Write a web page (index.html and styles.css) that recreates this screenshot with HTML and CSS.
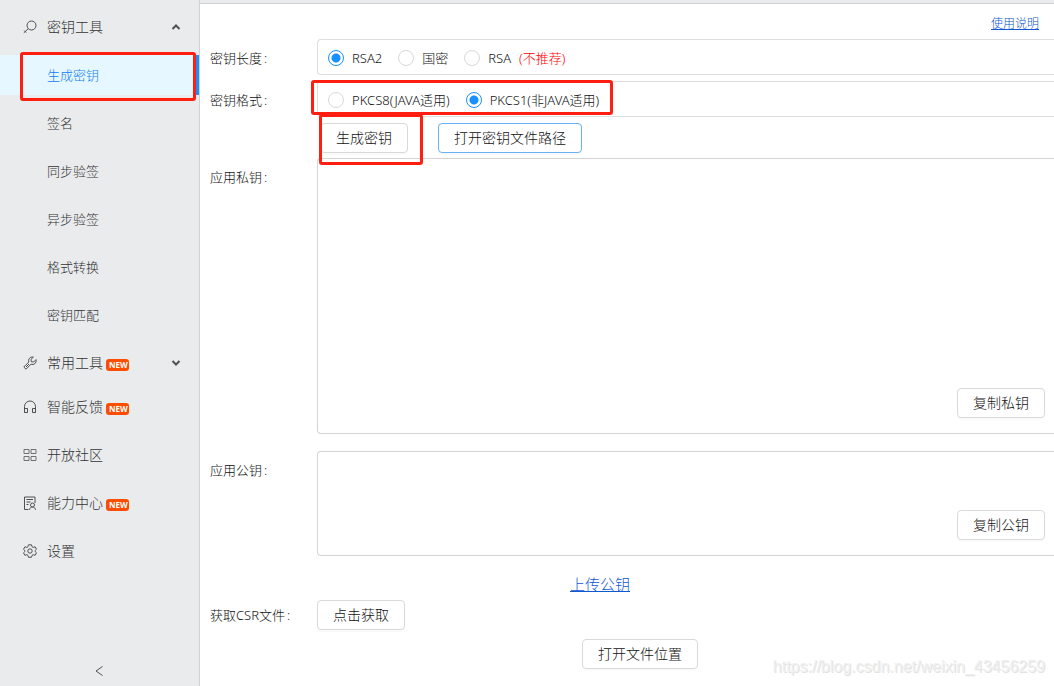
FILE: index.html
```html
<!DOCTYPE html>
<html lang="zh-CN">
<head>
<meta charset="utf-8">
<title>密钥工具</title>
<link rel="stylesheet" href="styles.css">
</head>
<body>
<div class="app">
  <aside class="sidebar">
    <nav class="nav">
      <button class="nav-item" type="button" aria-expanded="true">
        <svg class="icon" viewBox="0 0 14 14"><circle cx="8.500" cy="5.500" r="4.500"/><path d="M5.200 8.800 .8 12.800M1.200 10.600l2 2"/></svg>
        <span>密钥工具</span>
        <svg class="chevron" viewBox="0 0 10 10"><path d="M1.500 7 5 3.500 8.500 7"/></svg>
      </button>
      <a class="nav-item sub active" href="#generate">生成密钥<span class="mark mark-nav"></span></a>
      <a class="nav-item sub" href="#sign">签名</a>
      <a class="nav-item sub" href="#sync">同步验签</a>
      <a class="nav-item sub" href="#async">异步验签</a>
      <a class="nav-item sub" href="#convert">格式转换</a>
      <a class="nav-item sub" href="#match">密钥匹配</a>
      <button class="nav-item tight" type="button" aria-expanded="false">
        <svg class="icon" viewBox="0 0 14 14"><path d="M9.500 1a3.700 3.700 0 0 0-3.700 5L.8 11l2.200 2.200L8 8.200a3.700 3.700 0 0 0 5-4.600L10.600 6 8.300 5.700 8 3.400l2.400-2.300zM3 11l3-3"/></svg>
        <span>常用工具</span><span class="badge">NEW</span>
        <svg class="chevron" viewBox="0 0 10 10"><path d="M1.500 3 5 6.500 8.500 3"/></svg>
      </button>
      <a class="nav-item" href="#feedback">
        <svg class="icon" viewBox="0 0 14 14"><path d="M1.500 12.500V6.500a5.500 5.500 0 0 1 11 0v6M1.500 8.500H4.500v4H1.500zM9.500 8.500h3v4h-3z"/></svg>
        <span>智能反馈</span><span class="badge">NEW</span>
      </a>
      <a class="nav-item" href="#community">
        <svg class="icon soft" viewBox="0 0 14 14"><path d="M1 1.500h5V5.500H1zM8 1.500h5V5.500H8zM1 8.500h5v4H1zM8 8.500h5v4H8z"/></svg>
        <span>开放社区</span>
      </a>
      <a class="nav-item" href="#ability">
        <svg class="icon" viewBox="0 0 14 14"><path d="M5.500 13.500h-4V1h10.500v6M3.500 3.500h6.500M3.500 6h4M3.500 8.500h2M6.500 13.800c0-3.600 6-3.600 6 0"/><circle cx="9.500" cy="9" r="2"/></svg>
        <span>能力中心</span><span class="badge">NEW</span>
      </a>
      <a class="nav-item" href="#settings">
        <svg class="icon" viewBox="0 0 14 14"><path d="M5.500 .8h3l.5 1.900 1.200.7 1.900-.6 1.400 2.500L12.100 6.600v.9l1.400 1.300-1.400 2.500-1.900-.6-1.200.7-.5 1.900h-3L5 11.400l-1.200-.7-1.900.6L.5 8.800l1.400-1.300v-.9L.5 5.300l1.400-2.500 1.900.6L5 2.700z"/><circle cx="7" cy="7" r="2.200"/></svg>
        <span>设置</span>
      </a>
    </nav>
    <button class="collapse" type="button" aria-label="收起">
      <svg class="collapse-icon" viewBox="0 0 10 12"><path d="M8.500 1.500 2 6l6.500 4.500"/></svg>
    </button>
  </aside>

  <main class="main">
    <div class="help"><a class="link" href="#help">使用说明</a></div>
    <form class="form">
      <div class="row">
        <span class="label" id="len-label">密钥长度<i>:</i></span>
        <div class="panel" role="radiogroup" aria-labelledby="len-label">
          <div class="options">
            <label class="option"><input type="radio" name="len" checked>RSA2</label>
            <label class="option"><input type="radio" name="len">国密</label>
            <label class="option"><input type="radio" name="len">RSA<span class="warn">(不推荐)</span></label>
          </div>
        </div>
      </div>
      <div class="row">
        <span class="label" id="fmt-label">密钥格式<i>:</i></span>
        <div class="panel" role="radiogroup" aria-labelledby="fmt-label">
          <div class="options">
            <label class="option"><input type="radio" name="fmt">PKCS8(JAVA适用)</label>
            <label class="option"><input type="radio" name="fmt" checked>PKCS1(非JAVA适用)</label>
            <span class="mark mark-format"></span>
          </div>
        </div>
      </div>
      <div class="actions">
        <div class="generate">
          <button class="btn" type="button">生成密钥</button>
          <span class="mark mark-generate"></span>
        </div>
        <button class="btn focused" type="button">打开密钥文件路径</button>
      </div>
      <div class="row private">
        <label class="label" for="private-key">应用私钥<i>:</i></label>
        <div class="field">
          <textarea class="key tall" id="private-key"></textarea>
          <button class="btn copy" type="button">复制私钥</button>
        </div>
      </div>
      <div class="row public">
        <label class="label" for="public-key">应用公钥<i>:</i></label>
        <div class="field">
          <textarea class="key" id="public-key"></textarea>
          <button class="btn copy" type="button">复制公钥</button>
        </div>
      </div>
      <div class="upload"><a class="link" href="#upload">上传公钥</a></div>
      <div class="row csr">
        <label class="label" for="csr-button">获取CSR文件<i>:</i></label>
        <button class="btn" id="csr-button" type="button">点击获取</button>
      </div>
      <div class="location"><button class="btn" type="button">打开文件位置</button></div>
    </form>
    <span class="watermark">https://blog.csdn.net/weixin_43456259</span>
  </main>
</div>
</body>
</html>
```
FILE: styles.css
```css
* {
  box-sizing: border-box;
}

body {
  margin: 0;
  font-family: "Noto Sans", "Noto Sans CJK SC", sans-serif;
  font-size: 13px;
  font-weight: 300;
  line-height: 20px;
  color: #111;
  background: #fff;
}

button,
textarea {
  font: inherit;
  color: inherit;
}

a {
  color: inherit;
  text-decoration: none;
}

svg {
  fill: none;
  stroke: #505050;
  flex: none;
}

.app {
  display: grid;
  grid-template-columns: 200px 1fr;
  min-height: 100vh;
}

/* Sidebar */

.sidebar {
  display: flex;
  flex-direction: column;
  justify-content: space-between;
  background: #e9ebed;
  border-right: 1px solid #d2d2d2;
  color: #333;
}

.nav {
  display: flex;
  flex-direction: column;
  gap: 8px;
  padding-top: 7px;
}

.nav-item {
  position: relative;
  display: flex;
  align-items: center;
  width: 100%;
  height: 40px;
  padding: 0 18px 0 23px;
  border: 0;
  background: none;
  font-size: 14px;
  text-align: left;
}

.nav-item.sub {
  padding-left: 47px;
  padding-bottom: 1px;
  font-size: 13px;
}

.nav-item.tight {
  margin-bottom: -4px;
}

.nav-item.active {
  color: #1080f5;
  background: #e6f7ff;
  border-right: 3px solid #1890ff;
}

.icon {
  width: 14px;
  height: 14px;
  margin-right: 10px;
}

.icon.soft {
  stroke: #707070;
}

.chevron {
  width: 10px;
  height: 10px;
  margin-left: auto;
  stroke-width: 2;
}

.badge {
  height: 12px;
  margin: 4px 0 0 3px;
  padding: 0 1px 0 3px;
  border-radius: 3px;
  background: #ff4d00;
  color: #fff;
  font-family: "Open Sans", sans-serif;
  font-size: 8px;
  font-weight: 700;
  line-height: 12px;
}

.collapse {
  display: flex;
  justify-content: center;
  padding: 9px 2px 9px 0;
  border: 0;
  background: none;
}

.collapse-icon {
  width: 10px;
  height: 12px;
}

/* Red emphasis frames */

.mark {
  position: absolute;
  z-index: 1;
  border: 3px solid #ff1e10;
  border-radius: 3px;
  pointer-events: none;
}

.mark-nav {
  inset: -3px 0 -6px 20px;
}

.mark-format {
  inset: -3px -14px 2px -17px;
}

.mark-generate {
  inset: -9px -15px -12px -1px;
}

/* Main panel */

.main {
  position: relative;
  border-top: 1px solid #d2d2d2;
  box-shadow: 0 -3px #e9ebed;
  margin-top: 3px;
}

.help {
  display: flex;
  justify-content: flex-end;
  padding: 10px 15px 5px;
  font-size: 12px;
}

.link {
  color: #1058d0;
  text-decoration: underline;
}

.form {
  display: flex;
  flex-direction: column;
}

.row {
  display: grid;
  grid-template-columns: 107px 1fr;
  align-items: start;
  padding-left: 10px;
  margin-bottom: 6px;
}

.label {
  padding-top: 9px;
}

.label i {
  margin-left: 2px;
  font-style: normal;
}

.panel {
  height: 36px;
  padding: 1px 0 0 10px;
  border: 1px solid #dedede;
  border-right: 0;
  border-radius: 4px 0 0 4px;
}

.options {
  position: relative;
  display: flex;
  gap: 16px;
  width: max-content;
  height: 34px;
}

.option {
  display: flex;
  align-items: center;
  gap: 8px;
}

.option input {
  appearance: none;
  width: 16px;
  height: 16px;
  margin: 0;
  border: 1px solid #d9d9d9;
  border-radius: 50%;
  background: #fff;
}

.option input:checked {
  border-color: #1890ff;
  background: radial-gradient(circle, #1890ff 4px, #fff 5px);
}

.warn {
  color: #f00;
}

.actions {
  display: flex;
  gap: 30px;
  padding-left: 120px;
  margin-bottom: 5px;
}

.generate {
  position: relative;
}

.btn {
  height: 30px;
  padding: 0 15px;
  border: 1px solid #d9d9d9;
  border-radius: 4px;
  background: #fff;
  box-shadow: 0 2px 0 rgba(0, 0, 0, 0.02);
  font-size: 14px;
  line-height: 28px;
  justify-self: start;
}

.btn.focused {
  border-color: #69b1f5;
}

.private {
  margin-bottom: 17px;
}

.public {
  margin-bottom: 18px;
}

.field {
  position: relative;
  display: flex;
}

.key {
  width: 100%;
  height: 105px;
  padding: 4px 11px;
  border: 1px solid #d4d4d4;
  border-right: 0;
  border-radius: 4px 0 0 4px;
  resize: none;
}

.key.tall {
  height: 276px;
}

.copy {
  position: absolute;
  right: 9px;
  bottom: 16px;
}

.upload {
  padding-right: 54px;
  margin-bottom: 6px;
  text-align: center;
  font-size: 15px;
}

.csr {
  margin-bottom: 9px;
}

.csr .label {
  padding-top: 5px;
}

.location {
  padding-left: 26px;
  text-align: center;
}

.watermark {
  position: absolute;
  right: 9px;
  bottom: 9px;
  font-family: "Liberation Sans", sans-serif;
  font-size: 16px;
  font-weight: 400;
  color: #f0f0f0;
  text-shadow: 1px 1px 0 #e2e2e2;
}
```
